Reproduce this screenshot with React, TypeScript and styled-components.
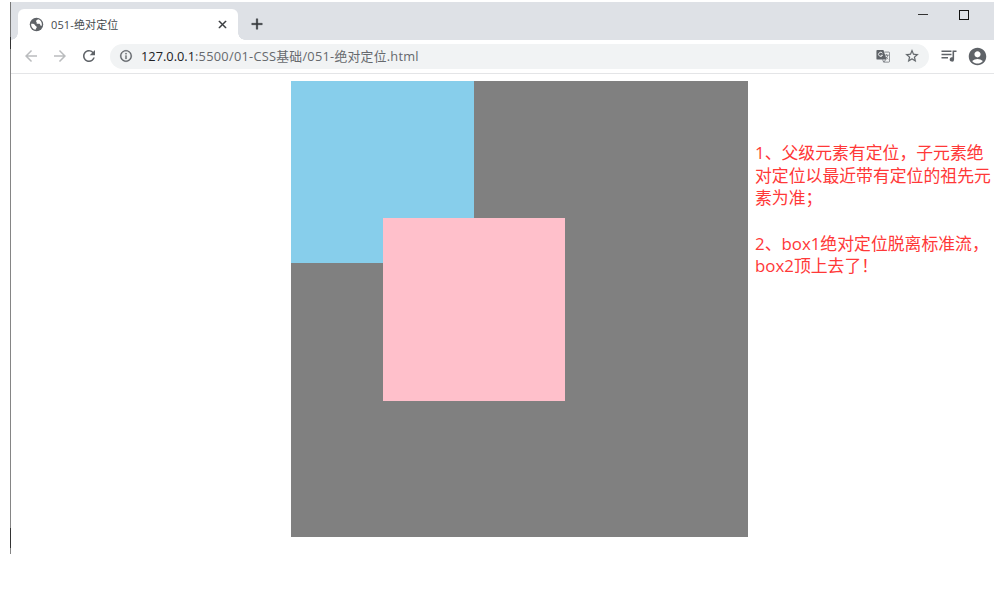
import React from "react";
import styled, { createGlobalStyle } from "styled-components";
import {
  MdAccountCircle,
  MdAdd,
  MdArrowBack,
  MdArrowForward,
  MdClose,
  MdInfoOutline,
  MdRefresh,
  MdStarBorder,
} from "react-icons/md";

const GlobalStyle = createGlobalStyle`
  * { box-sizing: border-box; }
  body {
    margin: 0;
    background: #fff;
    font-family: "Open Sans", "Noto Sans CJK SC", sans-serif;
    overflow: hidden;
  }
`;

const BrowserWindow = styled.div`
  width: 984px;
  height: 552px;
  margin: 2px 0 0 10px;
  border-left: 1px solid #858585;
  border-image: linear-gradient(#777 0 36px, #333 36px 48px, #858585 48px 525px, #333 525px 545px, #858585 545px) 1;
  border-width: 0 0 0 1px;
`;

const TabStrip = styled.div`
  display: flex;
  height: 38px;
  padding-left: 7px;
  background: #dee1e6;
`;

const Tab = styled.div`
  display: flex;
  align-items: center;
  width: 220px;
  height: 31px;
  margin-top: 7px;
  padding: 0 9px 0 11px;
  border-radius: 6px 6px 0 0;
  background: #fff;
  color: #45494d;
  position: relative;

  &::before,
  &::after {
    content: "";
    position: absolute;
    bottom: 0;
    width: 7px;
    height: 7px;
  }
  &::before {
    left: -7px;
    background: radial-gradient(circle at 0 0, transparent 6.5px, #fff 7px);
  }
  &::after {
    right: -7px;
    background: radial-gradient(circle at 100% 0, transparent 6.5px, #fff 7px);
  }
`;

const TabTitle = styled.span`
  flex: 1;
  margin-left: 7px;
  font-size: 11px;
  line-height: 16px;
  letter-spacing: 0.13px;
  white-space: nowrap;
`;

const Icon = styled.span<{ $size: number; $color?: string; $left?: number; $weight?: number }>`
  display: flex;
  flex: none;
  margin-left: ${(p) => p.$left ?? 0}px;
  color: ${(p) => p.$color ?? "#5f6368"};
  svg {
    display: block;
    width: ${(p) => p.$size}px;
    height: ${(p) => p.$size}px;
    stroke-width: ${(p) => p.$weight ?? 0};
  }
  path[d^="M0 0h24v24"] {
    stroke: none;
  }
`;

const NewTab = styled.div`
  margin: 13px 0 0 10px;
`;

const WindowControls = styled.div`
  display: flex;
  gap: 31px;
  margin: 8px 25px 0 auto;
`;

const Minimize = styled.span`
  width: 10px;
  height: 1px;
  margin-top: 4px;
  background: #333;
`;

const Maximize = styled.span`
  width: 10px;
  height: 10px;
  border: 1px solid #111;
`;

const Toolbar = styled.div`
  display: flex;
  align-items: center;
  height: 34px;
  padding: 0 0 1px 11px;
  border-bottom: 1px solid #e4e5e7;
  background: #fff;
`;

const AddressBar = styled.div`
  display: flex;
  align-items: center;
  width: 819px;
  height: 25px;
  margin-left: 12px;
  padding: 0 9px;
  border-radius: 13px;
  background: #f1f3f4;
`;

const Url = styled.span`
  flex: 1;
  margin-left: 8px;
  color: #66696d;
  font-size: 12.8px;
  line-height: 20px;
  letter-spacing: 0.26px;
  white-space: nowrap;
`;

const Host = styled.span`
  color: #202124;
  letter-spacing: 0;
`;

const Page = styled.main`
  display: flex;
  align-items: flex-start;
  padding: 7px 0 0 280px;
`;

const Parent = styled.div`
  position: relative;
  flex: none;
  width: 457px;
  height: 456px;
  background: #808080;
`;

const BoxTwo = styled.div`
  width: 183px;
  height: 182px;
  background: #87ceeb;
`;

const BoxOne = styled.div`
  position: absolute;
  top: 137px;
  left: 91.5px;
  width: 182.4px;
  height: 183px;
  background: #ffc0cb;
`;

const Notes = styled.div`
  margin: 61px 0 0 7px;
  color: #ff3838;
  font-size: 16.85px;
  line-height: 22.7px;
  white-space: nowrap;
`;

const NoteLine = styled.p`
  height: 22.7px;
  margin: 0;
`;

const QueueIcon = () => (
  <svg viewBox="0 0 16 16" fill="currentColor">
    <path d="M0.5 2.5h10v1.6h-10zM0.5 5.7h10v1.6h-10zM0.5 9h6.5v1.6h-6.5zM11.5 2.5h4v1.6h-2.4v7.3a2.2 2.2 0 1 1-1.6-2.1z" />
  </svg>
);

const GlobeIcon = () => (
  <svg viewBox="0 0 16 16">
    <circle cx="8" cy="8" r="7.2" fill="#5f6368" />
    <path
      d="M2.3 7.2C4.4 6.9 6.2 7.5 6.7 9c.3 1 1.7.7 1.6 2-.1 1-1.2 1.2-1.2 2.6C4.3 13.4 2 10.5 2.3 7.2zM9.5 2.5c-.2 1-1.8.8-2 1.8-.1.9 1 1 .7 2-.2.8.8 1.2 1.8.9 1.2-.4 2.1.3 2 1.3 0 .6.7 1 1.6.8C14.3 6 12.5 3.2 9.5 2.5z"
      fill="#fff"
    />
  </svg>
);

const TranslateIcon = () => (
  <svg viewBox="0 0 16 16" fill="none" stroke="currentColor">
    <path d="M1.5 1h7l3.5 11H1.5a1 1 0 0 1-1-1V2a1 1 0 0 1 1-1z" fill="currentColor" stroke="none" />
    <path d="M7.4 4.8A2.4 2.4 0 1 0 7.5 7.2H5.4" stroke="#f1f3f4" strokeWidth="1.1" />
    <path d="M9.5 3.5h5a1 1 0 0 1 1 1V14a1 1 0 0 1-1 1H8.8L7.5 12" strokeWidth="0.8" />
    <path d="M9.5 7h5M12 6v1M13.5 7c-.3 2-1.3 3.3-2.7 4.4M10.5 8.5l3.3 3.3M8.8 15l2.5-3" strokeWidth="0.9" />
  </svg>
);

export default function App() {
  return (
    <>
      <GlobalStyle />
      <BrowserWindow>
        <TabStrip>
          <Tab>
            <Icon $size={15}><GlobeIcon /></Icon>
            <TabTitle>051-绝对定位</TabTitle>
            <Icon $size={13} $color="#34373a" $weight={0.8}><MdClose /></Icon>
          </Tab>
          <NewTab>
            <Icon $size={18} $color="#34373a" $weight={0.5}><MdAdd /></Icon>
          </NewTab>
          <WindowControls>
            <Minimize />
            <Maximize />
          </WindowControls>
        </TabStrip>
        <Toolbar>
          <Icon $size={18} $color="#babcbe"><MdArrowBack /></Icon>
          <Icon $size={18} $color="#babcbe" $left={11}><MdArrowForward /></Icon>
          <Icon $size={18} $left={11}><MdRefresh /></Icon>
          <AddressBar>
            <Icon $size={14} $weight={0.4}><MdInfoOutline /></Icon>
            <Url><Host>127.0.0.1</Host>:5500/01-CSS基础/051-绝对定位.html</Url>
            <Icon $size={14}><TranslateIcon /></Icon>
            <Icon $size={16} $left={14} $weight={0.2}><MdStarBorder /></Icon>
          </AddressBar>
          <Icon $size={16} $left={12}><QueueIcon /></Icon>
          <Icon $size={21} $left={10}><MdAccountCircle /></Icon>
        </Toolbar>
        <Page>
          <Parent>
            <BoxOne />
            <BoxTwo />
          </Parent>
          <Notes>
            <NoteLine>1、父级元素有定位，子元素绝</NoteLine>
            <NoteLine>对定位以最近带有定位的祖先元</NoteLine>
            <NoteLine>素为准；</NoteLine>
            <NoteLine />
            <NoteLine>2、box1绝对定位脱离标准流，</NoteLine>
            <NoteLine>box2顶上去了！</NoteLine>
          </Notes>
        </Page>
      </BrowserWindow>
    </>
  );
}
